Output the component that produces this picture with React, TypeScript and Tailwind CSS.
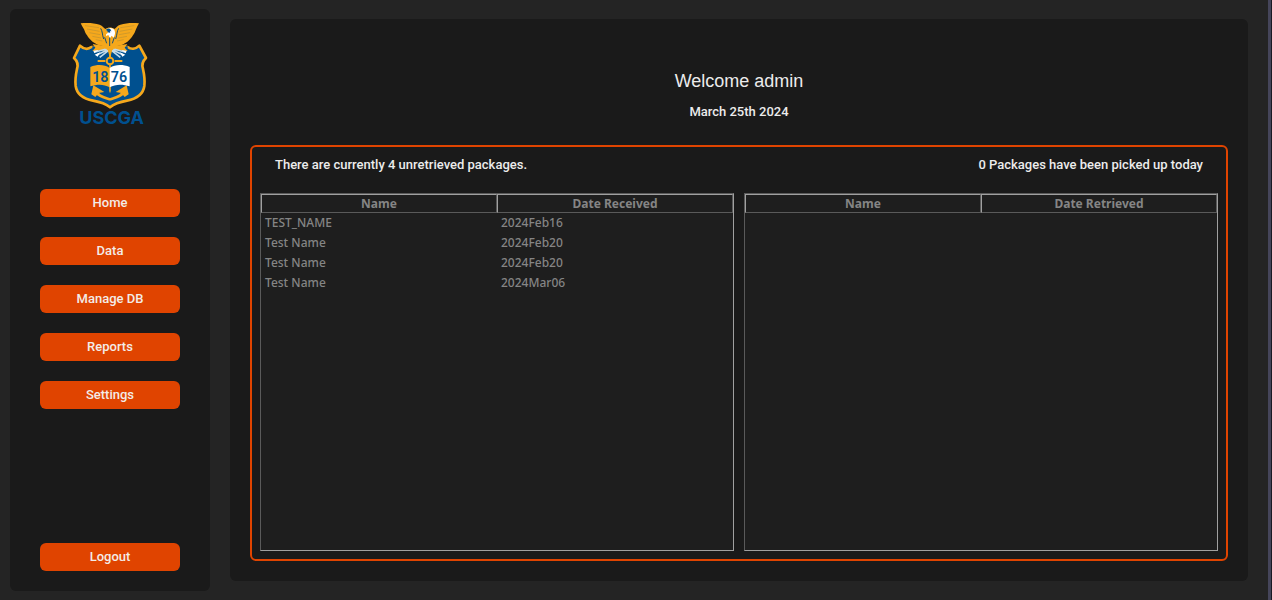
import type { ReactNode } from 'react';

function Logo() {
  return (
    <svg viewBox="15 18 240 327" className="h-[109px] w-20" role="img" aria-label="USCGA 1876">
      {/* Shield */}
      <path
        d="M45 92 C57 103 70 103 79 96 L188 96 C198 103 212 103 223 92 L243 129 C233 138 229 147 234 162 C238 180 240 196 238 213 C234 241 212 252 186 257 C164 261 147 267 135 277 C123 267 106 261 84 257 C58 252 36 241 32 213 C30 196 32 180 36 162 C41 147 37 138 27 129 Z"
        fill="#00508f"
        stroke="#f5a81c"
        strokeWidth="8"
        strokeLinejoin="round"
      />
      <path d="M82 94 H188 V104 H82 Z" fill="#00508f" />
      {/* Anchor */}
      <g fill="none" stroke="#f5a81c">
        <circle cx="135" cy="138" r="10" strokeWidth="6" />
        <path d="M98 138 H121 M149 138 H172 M135 118 V127" strokeWidth="6" />
        <path d="M91 225 C96 242 116 247 135 253 C154 247 174 242 179 225" strokeWidth="8" />
        <path d="M135 148 V238" strokeWidth="5" />
      </g>
      <path d="M85 211 L118 231 L101 234 L91 246 L79 238 Z M185 211 L152 231 L169 234 L179 246 L191 238 Z" fill="#f5a81c" />
      <path d="M135 228 l3 7 7 0 -5 5 2 7 -7 -4 -7 4 2 -7 -5 -5 7 0z" fill="#00508f" />
      {/* Book */}
      <path d="M76 156 C97 148 117 148 134 159 V217 C117 207 97 207 76 214 Z" fill="#f5a81c" />
      <path d="M134 159 C151 148 173 148 194 156 V214 C173 207 151 207 134 217 Z" fill="#fff" />
      <text x="106" y="202" textAnchor="middle" fill="#00508f" className="font-['Roboto',sans-serif] text-[43px] font-semibold">18</text>
      <text x="162" y="202" textAnchor="middle" fill="#00508f" className="font-['Roboto',sans-serif] text-[43px] font-semibold">76</text>
      {/* Ribbon, arrows and branch held in the talons */}
      <path d="M83 87 L120 93 L135 102 L150 93 L187 87 L179 98 L188 108 L146 106 L135 112 L124 106 L82 108 L91 98 Z" fill="#f5a81c" />
      <g stroke="#c3daea" strokeWidth="5" fill="none">
        <path d="M90 111 L124 102 M95 120 L127 105 M104 127 L130 107 M180 111 L146 102 M175 120 L143 105 M166 127 L140 107" />
      </g>
      <path d="M85 107 L101 105 L88 115 Z M89 119 L105 112 L98 125 Z M185 107 L169 105 L182 115 Z M181 119 L165 112 L172 125 Z" fill="#fff" />
      {/* Eagle */}
      <path
        d="M47 25 C67 23 88 24 104 29 C113 32 116 40 122 42 C127 36 142 36 148 42 C154 39 157 31 166 29 C183 24 202 23 222 25 C218 31 216 37 213 43 C210 51 208 56 204 61 C200 68 197 71 192 76 C186 82 179 86 172 89 L157 93 L149 101 L143 100 L137 123 L133 123 L127 100 L121 101 L113 93 L98 89 C91 86 84 82 78 76 C73 71 70 68 66 61 C62 56 60 51 57 43 C53 37 50 31 47 25 Z"
        fill="#f5a81c"
      />
      <g stroke="#174e70" fill="none">
        <path
          d="M60 32 L102 38 M66 42 L104 49 M73 53 L106 59 M82 64 L108 69 M92 74 L112 78 M208 32 L166 38 M202 42 L164 49 M195 53 L162 59 M186 64 L160 69 M176 74 L156 78"
          strokeWidth="2"
          opacity=".25"
        />
        <path d="M107 40 C113 49 111 58 116 72 M161 40 C155 49 157 58 152 72 M119 67 L125 85 M134 66 L134 93 M148 67 L142 85" strokeWidth="3" />
      </g>
      <path d="M124 46 C128 36 146 37 149 47 C152 57 148 61 146 68 L140 62 L135 70 L130 60 L123 63 Z" fill="#fff" />
      <path d="M124 43 C132 38 138 42 139 49 L134 53 L124 51 Z" fill="#00508f" />
      <path d="M126 46 L119 50 L121 59 L129 53 Z" fill="#f5a81c" />
      <circle cx="137" cy="49" r="2" fill="#fff" />
      <text x="140" y="327" textAnchor="middle" fill="#00508f" className="font-['Inter',sans-serif] text-[54px] leading-none font-bold">USCGA</text>
    </svg>
  );
}

function NavButton({ children }: { children: ReactNode }) {
  return (
    <button
      type="button"
      className="h-7 w-full rounded-md bg-[#e04400] text-[13px] leading-7 font-medium text-[#f3ece8] hover:bg-[#c23b00]"
    >
      {children}
    </button>
  );
}

function PackageTable({ label, dateHeading, rows }: { label: string; dateHeading: string; rows: string[][] }) {
  return (
    <div className="min-w-0 flex-1 border border-t-[#5a5a5a] border-r-[#a0a0a0] border-b-[#a0a0a0] border-l-[#5a5a5a] bg-[#1e1e1e]">
      <table
        aria-label={label}
        className="w-full table-fixed border-separate border-spacing-0 font-['Noto_Sans','Open_Sans',sans-serif] text-xs leading-4 text-[#858585]"
      >
        <thead>
          <tr>
            {['Name', dateHeading].map((heading) => (
              <th
                key={heading}
                scope="col"
                className="h-[19px] border border-t-[#a0a0a0] border-r-[#5a5a5a] border-b-[#5a5a5a] border-l-[#a0a0a0] p-0 font-bold"
              >
                {heading}
              </th>
            ))}
          </tr>
        </thead>
        <tbody>
          {rows.map((row, i) => (
            <tr key={i} className="h-5">
              <td className="px-1 py-0">{row[0]}</td>
              <td className="px-1 py-0">{row[1]}</td>
            </tr>
          ))}
        </tbody>
      </table>
    </div>
  );
}

const unretrieved = [
  ['TEST_NAME', '2024Feb16'],
  ['Test Name', '2024Feb20'],
  ['Test Name', '2024Feb20'],
  ['Test Name', '2024Mar06'],
];

export default function App() {
  return (
    <div className="flex min-h-screen border-r border-[#1a1a24] bg-[#242424] font-['Roboto',sans-serif] text-[13px] leading-4 font-medium text-[#ececec]">
      <div className="flex min-w-0 flex-1 gap-5 border-r-[3px] border-[#45455a] pr-5 pl-2.5">
        <aside className="my-[9px] flex w-[200px] shrink-0 flex-col rounded-md bg-[#1a1a1a] px-[30px] pt-3 pb-5">
          <div className="flex justify-center">
            <Logo />
          </div>
          <nav className="mt-[59px] flex flex-col gap-5">
            <NavButton>Home</NavButton>
            <NavButton>Data</NavButton>
            <NavButton>Manage DB</NavButton>
            <NavButton>Reports</NavButton>
            <NavButton>Settings</NavButton>
          </nav>
          <div className="mt-auto pt-5">
            <NavButton>Logout</NavButton>
          </div>
        </aside>
        <main className="my-[19px] flex min-w-0 flex-1 flex-col rounded-md bg-[#1a1a1a] px-5 pt-[50px] pb-5">
          <header className="text-center">
            <h1 className="font-['Liberation_Sans',Arial,sans-serif] text-lg leading-6 font-normal">Welcome admin</h1>
            <p className="mt-[11px]">March 25th 2024</p>
          </header>
          <section className="mt-[25px] flex flex-1 flex-col rounded-md border-2 border-[#e04400] p-2 pt-2.5">
            <div className="flex justify-between px-[15px]">
              <p>There are currently 4 unretrieved packages.</p>
              <p>0 Packages have been picked up today</p>
            </div>
            <div className="mt-5 flex flex-1 gap-2.5">
              <PackageTable label="Unretrieved packages" dateHeading="Date Received" rows={unretrieved} />
              <PackageTable label="Packages picked up today" dateHeading="Date Retrieved" rows={[]} />
            </div>
          </section>
        </main>
      </div>
    </div>
  );
}
